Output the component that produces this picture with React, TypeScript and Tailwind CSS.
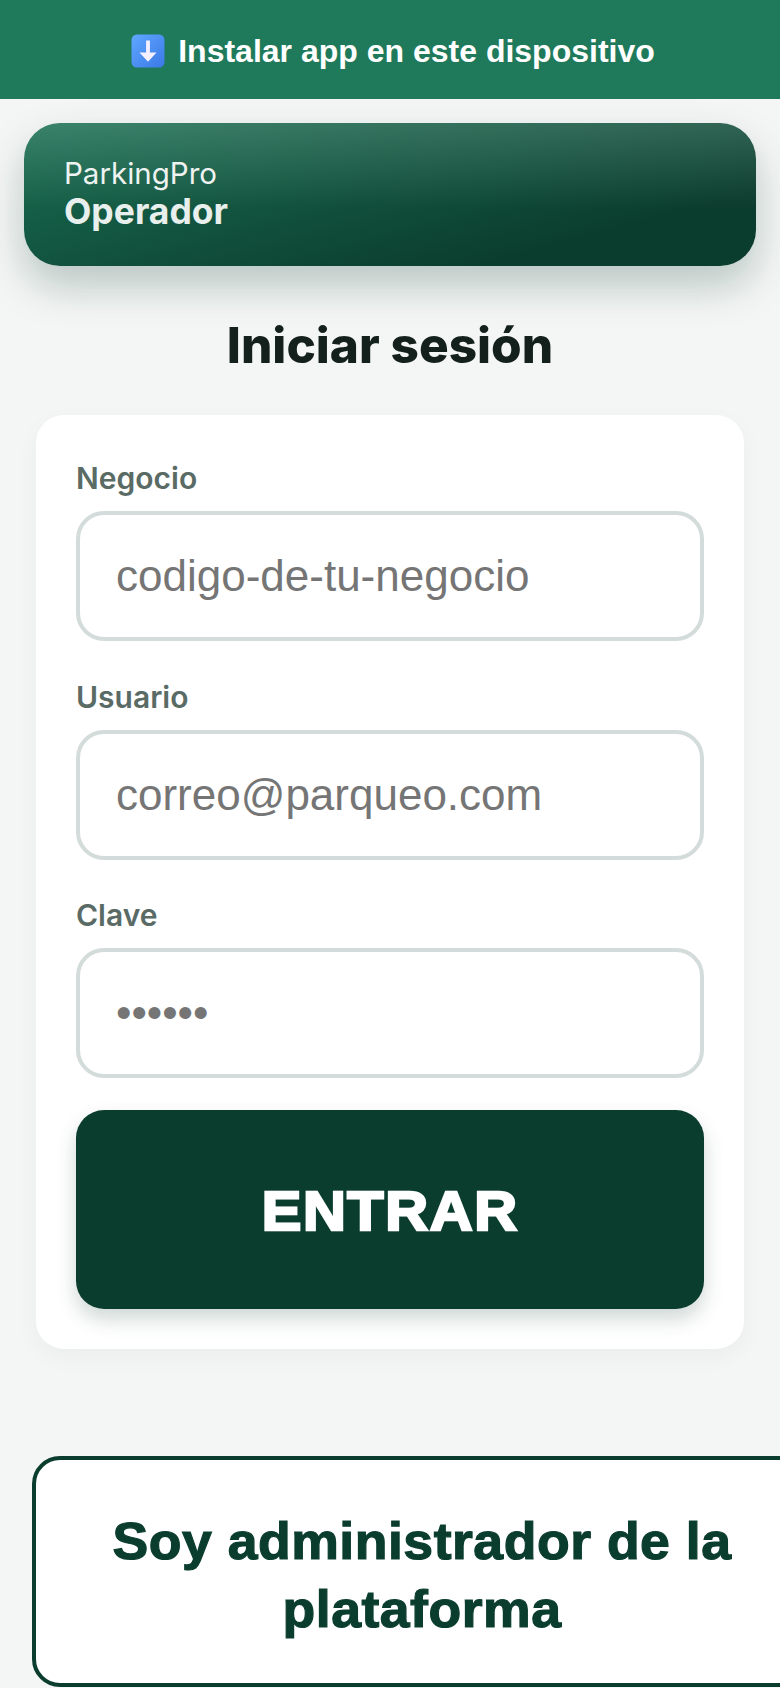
import type { ReactNode } from 'react'

const inter = 'font-["Inter",sans-serif]'
const arial = 'font-["Liberation_Sans",Arial,sans-serif]'

function Campo({ label, placeholder, tipo = 'text' }: { label: string; placeholder: string; tipo?: string }) {
  return (
    <label className="block">
      <span className={`block h-[45px] pt-[5px] text-[30px] leading-[36px] font-semibold text-[#5a6b65] ${inter}`}>{label}</span>
      <input
        type={tipo}
        placeholder={placeholder}
        className={`mt-[11px] block h-[130px] w-full rounded-[28px] border-[4px] border-[#d3dcda] bg-white px-[36px] text-[44px] outline-none ${arial} placeholder:text-[#757575]`}
      />
    </label>
  )
}

function IconoDescarga() {
  return (
    <svg width="34" height="34" viewBox="0 0 32 32" className="shrink-0">
      <defs>
        <linearGradient id="azul" x1="0" y1="0" x2="1" y2="1">
          <stop offset="0" stopColor="#5fa8ff" />
          <stop offset="1" stopColor="#3b78e7" />
        </linearGradient>
      </defs>
      <rect x="0.5" y="0.5" width="31" height="31" rx="5" fill="url(#azul)" />
      <path d="M14.2 6h3.6v11.5H24L16 26l-8-8.5h6.2z" fill="#f5f0ff" />
    </svg>
  )
}

function Pagina({ children }: { children: ReactNode }) {
  return <div className="h-[1688px] w-[780px] overflow-hidden bg-[#f4f6f5]">{children}</div>
}

export default function App() {
  return (
    <Pagina>
      <div className={`flex h-[99px] items-center justify-center gap-[13px] bg-[#1f7a5c] pt-[2px] pl-[6px] text-[32px] font-bold text-white ${arial}`}>
        <IconoDescarga />
        <span>Instalar app en este dispositivo</span>
      </div>

      <div className="mx-[24px] mt-[24px] flex h-[143px] flex-col justify-center rounded-[36px] bg-[linear-gradient(to_bottom,rgba(255,255,255,0.14),rgba(255,255,255,0)_60%),linear-gradient(165deg,#1a6f53,#0b3d2e_78%)] px-[40px] pb-[4px] shadow-[0_20px_40px_rgba(11,61,46,0.25)]">
        <div className={`text-[29.5px] leading-[38px] text-[#eef3f1] ${inter}`}>ParkingPro</div>
        <div className={`text-[35.5px] leading-[40px] font-bold text-[#e8efec] ${inter}`}>Operador</div>
      </div>

      <h1 className={`mt-[50px] text-center text-[49.5px] leading-[58px] font-extrabold text-[#14201c] ${inter}`}>Iniciar sesión</h1>

      <div className="mx-[36px] mt-[41px] rounded-[28px] bg-white p-[40px] shadow-[0_8px_24px_rgba(0,0,0,0.04)]">
        <div className="flex flex-col gap-[32.5px]">
          <Campo label="Negocio" placeholder="codigo-de-tu-negocio" />
          <Campo label="Usuario" placeholder="correo@parqueo.com" />
          <Campo label="Clave" placeholder="••••••" tipo="password" />
        </div>
        <button className={`mt-[32px] h-[199px] w-full rounded-[28px] bg-[#0b3d2e] pt-[3px] text-[56px] font-bold tracking-[1.5px] text-white shadow-[0_10px_20px_rgba(11,61,46,0.2)] ${arial} [-webkit-text-stroke:2.5px_white]`}>
          <span className="inline-block scale-x-[1.06]">ENTRAR</span>
        </button>
      </div>

      <button className={`mt-[107px] ml-[32px] block h-[231px] w-[780px] rounded-[28px] border-[4px] border-[#0b3d2e] bg-white px-[40px] pt-[6px] text-[52px] leading-[68px] font-bold tracking-[0.5px] text-[#0b3d2e] ${arial} [-webkit-text-stroke:1.2px_#0b3d2e]`}>
        <span className="inline-block scale-x-[1.03]">Soy administrador de la plataforma</span>
      </button>
    </Pagina>
  )
}
